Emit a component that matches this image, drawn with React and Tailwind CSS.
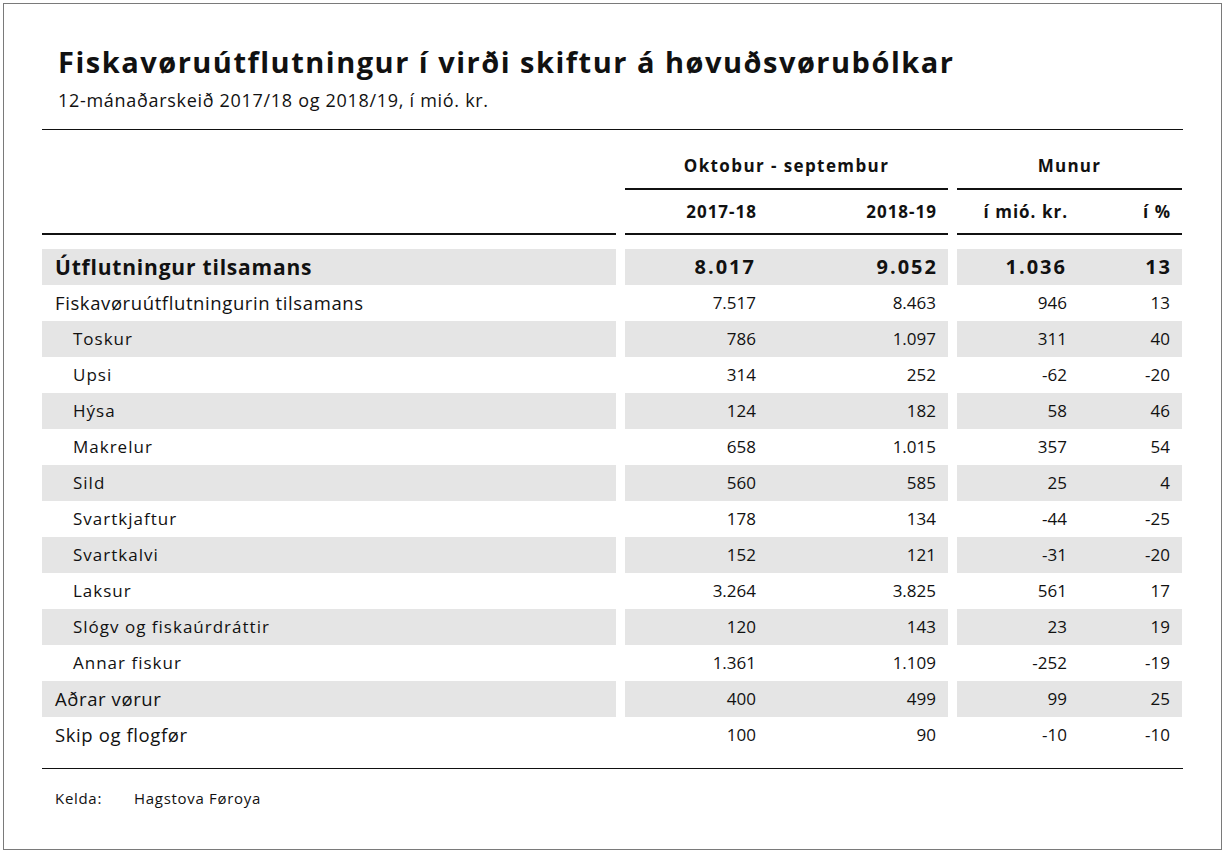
const rows = [
  { label: 'Útflutningur tilsamans', v: ['8.017', '9.052', '1.036', '13'], kind: 'total' },
  { label: 'Fiskavøruútflutningurin tilsamans', v: ['7.517', '8.463', '946', '13'], kind: 'main' },
  { label: 'Toskur', v: ['786', '1.097', '311', '40'], kind: 'sub' },
  { label: 'Upsi', v: ['314', '252', '-62', '-20'], kind: 'sub' },
  { label: 'Hýsa', v: ['124', '182', '58', '46'], kind: 'sub' },
  { label: 'Makrelur', v: ['658', '1.015', '357', '54'], kind: 'sub' },
  { label: 'Sild', v: ['560', '585', '25', '4'], kind: 'sub' },
  { label: 'Svartkjaftur', v: ['178', '134', '-44', '-25'], kind: 'sub' },
  { label: 'Svartkalvi', v: ['152', '121', '-31', '-20'], kind: 'sub' },
  { label: 'Laksur', v: ['3.264', '3.825', '561', '17'], kind: 'sub' },
  { label: 'Slógv og fiskaúrdráttir', v: ['120', '143', '23', '19'], kind: 'sub' },
  { label: 'Annar fiskur', v: ['1.361', '1.109', '-252', '-19'], kind: 'sub' },
  { label: 'Aðrar vørur', v: ['400', '499', '99', '25'], kind: 'main' },
  { label: 'Skip og flogfør', v: ['100', '90', '-10', '-10'], kind: 'main' },
];

function Row({ row, shaded }) {
  const bg = shaded ? 'bg-[#e5e5e5]' : '';
  const isTotal = row.kind === 'total';
  // bold total numbers render wider in the reference, pad with tracking
  const num = isTotal ? 'text-[20px] font-bold tracking-[2px] -mr-[2px]' : 'text-[17px]';
  const label =
    row.kind === 'total'
      ? 'pl-[13px] text-[21px] font-bold tracking-[0.8px]'
      : row.kind === 'main'
        ? 'pl-[13px] text-[18.5px] tracking-[0.6px]'
        : 'pl-[31px] text-[17px] tracking-[1px]';
  return (
    <div className="flex h-[36px] leading-[36px]">
      <div className={`w-[574px] ${bg} ${label}`}>{row.label}</div>
      <div className={`ml-[9px] w-[323px] flex ${bg}`}>
        <div className={`w-[131px] text-right ${num}`}>{row.v[0]}</div>
        <div className={`flex-1 text-right pr-[12px] ${num}`}>{row.v[1]}</div>
      </div>
      <div className={`ml-[9px] w-[225px] flex ${bg}`}>
        <div className={`w-[110px] text-right ${num}`}>{row.v[2]}</div>
        <div className={`flex-1 text-right pr-[12px] ${num}`}>{row.v[3]}</div>
      </div>
    </div>
  );
}

export default function App() {
  return (
    <div className="bg-white w-[1225px] h-[854px] pt-[3px] pl-[3px] text-[#111]" style={{ fontFamily: '"Open Sans", "Noto Sans", sans-serif' }}>
      <div className="w-[1219px] h-[847px] border border-[#7a7a7a] pl-[38px] pt-[40px]">
        <div className="w-[1141px]">
          <div className="pl-[16px]">
            <h1 className="text-[29px] leading-[36px] font-bold tracking-[1.5px]">
              Fiskavøruútflutningur í virði skiftur á høvuðsvørubólkar
            </h1>
            <div className="mt-[8px] text-[18px] leading-[24px] tracking-[0.7px]">
              12-mánaðarskeið 2017/18 og 2018/19, í mió. kr.
            </div>
          </div>
          <div className="mt-[17px] border-t border-[#111]" />

          <div className="flex h-[60px]">
            <div className="w-[574px]" />
            <div className="ml-[9px] w-[323px] border-b-2 border-[#111] pt-[24px] text-center text-[17px] font-bold leading-[24px] tracking-[1.4px]">
              Oktobur - septembur
            </div>
            <div className="ml-[9px] w-[225px] border-b-2 border-[#111] pt-[24px] text-center text-[17px] font-bold leading-[24px] tracking-[1.2px]">
              Munur
            </div>
          </div>
          <div className="flex h-[45px] text-[17px] font-bold leading-[24px] tracking-[1px]">
            <div className="w-[574px] border-b-2 border-[#111]" />
            <div className="ml-[9px] w-[323px] flex border-b-2 border-[#111] pt-[10px]">
              <div className="w-[132px] text-right">2017-18</div>
              <div className="flex-1 text-right pr-[11px]">2018-19</div>
            </div>
            <div className="ml-[9px] w-[225px] flex border-b-2 border-[#111] pt-[10px]">
              <div className="w-[111px] text-right">í mió. kr.</div>
              <div className="flex-1 text-right pr-[11px]">í %</div>
            </div>
          </div>

          <div className="mt-[14px]">
            {rows.map((r, i) => (
              <Row key={r.label} row={r} shaded={i % 2 === 0} />
            ))}
          </div>

          <div className="mt-[15px] border-t border-[#111]" />
          <div className="mt-[19px] flex text-[15px] leading-[20px] tracking-[0.7px]">
            <div className="pl-[13px] w-[92px]">Kelda:</div>
            <div>Hagstova Føroya</div>
          </div>
        </div>
      </div>
    </div>
  );
}
